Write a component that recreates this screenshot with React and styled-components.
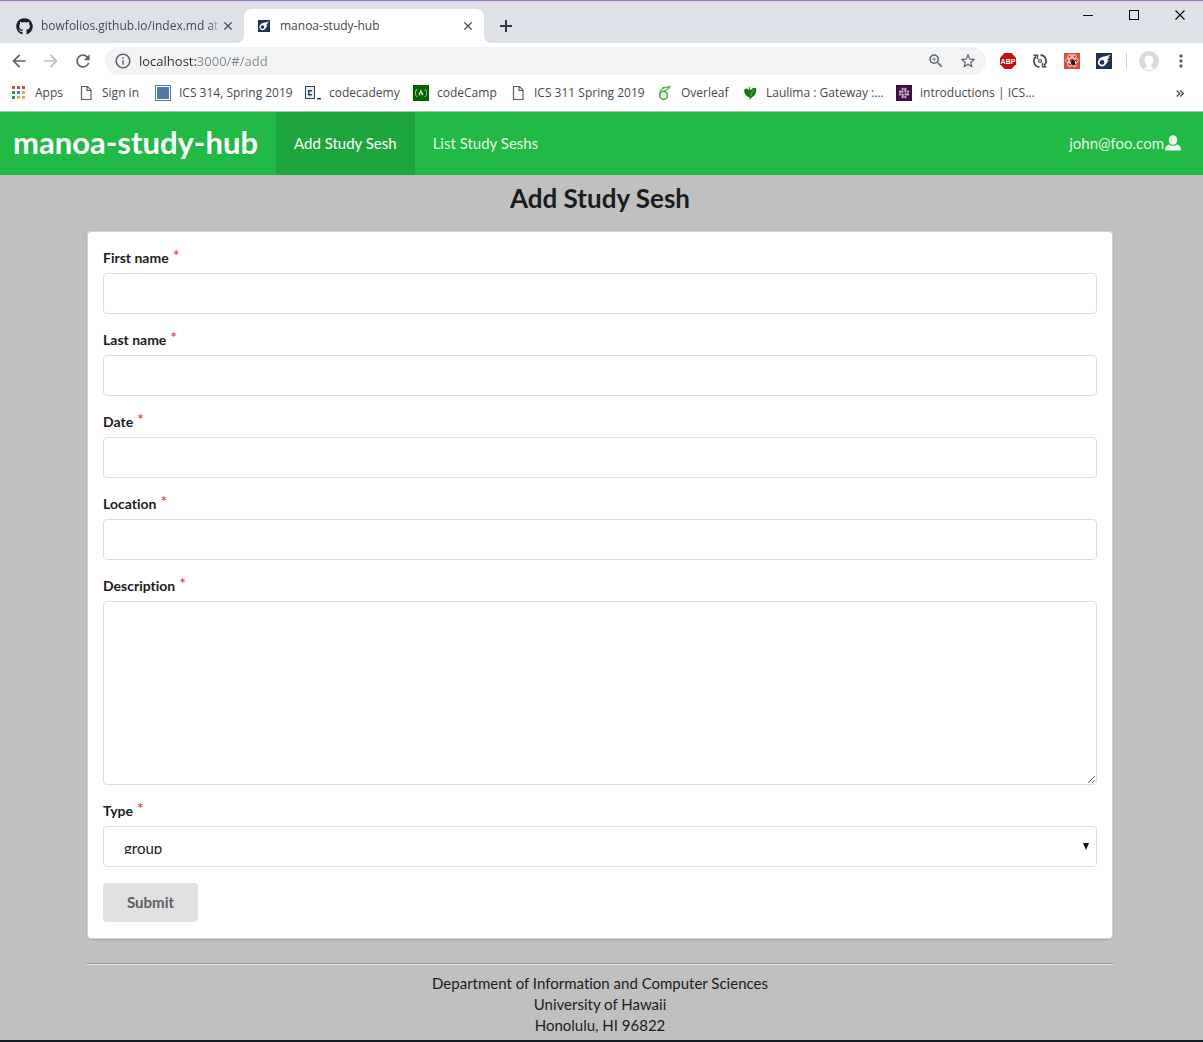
import React, { useState } from "react";
import styled, { createGlobalStyle, css } from "styled-components";
import { FaFreeCodeCamp, FaGithub, FaSlack } from "react-icons/fa";
import {
  MdArrowBack,
  MdArrowForward,
  MdInfoOutline,
  MdMoreVert,
  MdRefresh,
  MdStarBorder,
  MdZoomIn,
} from "react-icons/md";

const chromeFont = '"Open Sans", "Noto Sans", sans-serif';
const pageFont = 'Lato, "Liberation Sans", sans-serif';

const GlobalStyle = createGlobalStyle`
  *, *::before, *::after { box-sizing: border-box; font-feature-settings: "liga" 0; }
  body { margin: 0; background: #c0c0c0; }
  button, input, textarea, select { font: inherit; margin: 0; }
`;

const Window = styled.div`
  display: flex;
  flex-direction: column;
  min-height: 100vh;
  border-bottom: 2px solid #101c22;
`;

/* ---------- browser frame ---------- */

const TabStrip = styled.div`
  display: flex;
  align-items: flex-end;
  height: 43px;
  background: linear-gradient(#e2daf0 4px, #dee1e6 4px);
  border-top: 1px solid #8e7cab;
  font: 12px/16px ${chromeFont};
  color: #45494d;
`;

const Tab = styled.div`
  position: relative;
  display: flex;
  align-items: center;
  width: ${(p) => (p.$active ? 240 : 244)}px;
  height: 34px;
  padding: 0 8px 0 ${(p) => (p.$active ? 12 : 16)}px;
  ${(p) =>
    p.$active &&
    css`
      background: #fff;
      border-radius: 8px 8px 0 0;
      &::before,
      &::after {
        content: "";
        position: absolute;
        bottom: 0;
        width: 8px;
        height: 8px;
      }
      &::before {
        left: -8px;
        background: radial-gradient(circle at 0 0, transparent 8px, #fff 8px);
      }
      &::after {
        right: -8px;
        background: radial-gradient(circle at 100% 0, transparent 8px, #fff 8px);
      }
    `}
`;

const TabTitle = styled.span`
  flex: 1;
  min-width: 0;
  margin-left: 8px;
  overflow: hidden;
  white-space: nowrap;
  ${(p) => p.$fade && css`mask-image: linear-gradient(to right, #000 94%, transparent 100%);`}
`;

const BareButton = styled.button`
  display: inline-flex;
  align-items: center;
  justify-content: center;
  flex: none;
  width: ${(p) => p.$size || 16}px;
  height: ${(p) => p.$size || 16}px;
  padding: 0;
  border: 0;
  background: none;
  color: ${(p) => p.$color || "#5f6368"};
  svg { flex: none; }
`;

const NewTab = styled(BareButton)`
  margin: 0 0 9px 14px;
`;

const WindowControls = styled.div`
  display: flex;
  align-self: flex-start;
  gap: 30px;
  margin: 6px 15px 0 auto;
`;

const Toolbar = styled.div`
  display: flex;
  align-items: center;
  gap: 12px;
  height: 36px;
  padding: 0 12px 0 9px;
  background: #fff;
`;

const AddressBar = styled.div`
  display: flex;
  align-items: center;
  flex: 1;
  gap: 7px;
  height: 28px;
  padding: 0 10px 0 9px;
  border-radius: 14px;
  background: #f1f3f4;
  color: #5f6368;
`;

const AddressInput = styled.input`
  flex: 1;
  min-width: 0;
  padding: 0;
  border: 0;
  outline: 0;
  font: 13px/20px ${chromeFont};
  background: linear-gradient(to right, #2b2e31 58px, #80868b 58px);
  background-clip: text;
  -webkit-text-fill-color: transparent;
`;

const AddressActions = styled.div`
  display: flex;
  gap: 16px;
`;

const Extensions = styled.div`
  display: flex;
  align-items: center;
  gap: 16px;
  margin-left: 2px;
`;

const Profile = styled.div`
  display: flex;
  align-items: center;
  gap: 12px;
  padding-left: 13px;
  margin-left: -2px;
  background: linear-gradient(#cdd0d4, #cdd0d4) left center / 1px 16px no-repeat;
`;

const BookmarkBar = styled.nav`
  display: flex;
  align-items: center;
  height: 33px;
  padding: 0 15px 4px 11px;
  background: #fff;
  border-bottom: 1px solid #9fc7a6;
`;

const Bookmark = styled.a`
  display: flex;
  align-items: center;
  flex: none;
  gap: 8px;
  width: ${(p) => p.$width}px;
  color: #45494d;
  font: 12px/16px ${chromeFont};
  text-decoration: none;
  white-space: nowrap;
  svg { flex: none; }
`;

const Overflow = styled(BareButton)`
  margin-left: auto;
`;

/* ---------- site ---------- */

const NavBar = styled.nav`
  display: flex;
  align-items: stretch;
  height: 63px;
  padding-right: 4px;
  background: #21ba45;
  font: 15px/20px ${pageFont};
`;

const Brand = styled.a`
  display: flex;
  align-items: center;
  padding: 0 18px 4px 13px;
  color: #fff;
  font-size: 31px;
  line-height: 36px;
  font-weight: 700;
  text-decoration: none;
`;

const NavItem = styled.a`
  display: flex;
  align-items: center;
  gap: 1px;
  padding: 0 18px 2px;
  margin-left: ${(p) => (p.$end ? "auto" : 0)};
  background: ${(p) => (p.$active ? "#1ea63e" : "transparent")};
  color: ${(p) => (p.$active ? "#fff" : "rgba(255, 255, 255, 0.9)")};
  text-decoration: none;
`;

const Main = styled.main`
  flex: 1;
  padding: 6px 90px 0 87px;
  background: #c0c0c0;
  color: #1b1c1d;
  font: 15px/21px ${pageFont};
`;

const Title = styled.h2`
  margin: 0 0 16px;
  font-size: 26px;
  line-height: 34px;
  font-weight: 700;
  text-align: center;
`;

const Card = styled.form`
  display: flex;
  flex-direction: column;
  align-items: flex-start;
  gap: 16px;
  padding: 16px 15px;
  background: #fff;
  border: 1px solid #d4d4d5;
  border-radius: 4px;
  box-shadow: 0 1px 2px rgba(34, 36, 38, 0.15);
`;

const FieldBox = styled.div`
  width: 100%;
`;

const Label = styled.label`
  display: block;
  height: 20px;
  margin-bottom: 5px;
  font-size: 14px;
  line-height: 20px;
  font-weight: 700;
`;

const Required = styled.span`
  display: inline-block;
  margin-left: 4px;
  color: #db2828;
  font-size: 16px;
  font-weight: 400;
  line-height: 14px;
  vertical-align: top;
`;

const control = css`
  display: block;
  width: 100%;
  height: 41px;
  padding: 10px 15px;
  border: 1px solid #dcdddd;
  border-radius: 4px;
  outline: 0;
  background: #fff;
  color: #1b1c1d;
`;

const TextInput = styled.input`
  ${control}
`;

const TextArea = styled.textarea`
  ${control}
  height: 184px;
  resize: vertical;
`;

const SelectWrap = styled.div`
  position: relative;
  svg {
    position: absolute;
    right: 8px;
    top: 17px;
    pointer-events: none;
  }
`;

const Select = styled.select`
  ${control}
  padding: 11px 20px 12px;
  appearance: none;
`;

const Submit = styled.button`
  height: 39px;
  padding: 0 24px;
  border: 0;
  border-radius: 4px;
  background: #e0e1e2;
  color: #5f6061;
  font-weight: 700;
`;

const Rule = styled.hr`
  height: 2px;
  margin: 24px 0 8px;
  border: 0;
  border-top: 1px solid #979797;
  border-bottom: 1px solid #ececec;
`;

const Footer = styled.footer`
  padding-bottom: 4px;
  text-align: center;
`;

/* ---------- drawings ---------- */

const Cross = ({ size = 8, color = "#4a4d51", width = 1.6 }) => (
  <svg width={size} height={size} viewBox="0 0 10 10" stroke={color} strokeWidth={width}>
    <path d="M.5.5l9 9M9.5.5l-9 9" />
  </svg>
);

const MeteorIcon = ({ size = 16 }) => (
  <svg width={size} height={size} viewBox="0 0 16 16">
    <rect width="16" height="16" fill="#1f3157" />
    <circle cx="6" cy="9.4" r="3.3" fill="none" stroke="#fff" strokeWidth="1.8" />
    <path d="M3 6C5 3 9.500 4 15 1.500 13.500 3.500 12 4 11 4.600L14 4.400C12.500 5.500 11.200 6.300 10.600 7.300L13 7.200C11.500 8.500 10.500 10.500 9.600 11.500L9 8 7 6.200Z" fill="#fff" />
  </svg>
);

const appColors = ["#d5493d", "#d5493d", "#d5493d", "#2f9358", "#3f7de0", "#e9b02a", "#2f9358", "#e9b02a", "#e9b02a"];
const AppsIcon = () => (
  <svg width="16" height="16" viewBox="0 0 16 16">
    {appColors.map((c, i) => (
      <rect key={i} x={1 + (i % 3) * 5} y={1 + Math.floor(i / 3) * 5} width="3" height="3" fill={c} />
    ))}
  </svg>
);

const PageIcon = () => (
  <svg width="16" height="16" viewBox="0 0 16 16" fill="none" stroke="#5a5d61" strokeWidth="1.2">
    <path d="M3.500 1.500h6l3.500 3.500v9.500h-9.500zM9 1.500v4h4" />
  </svg>
);

const SquareIcon = () => (
  <svg width="16" height="16" viewBox="0 0 16 16">
    <rect x=".5" y=".5" width="15" height="15" fill="#fff" stroke="#507aa5" />
    <rect x="2" y="2" width="12" height="12" fill="#507aa5" />
  </svg>
);

const CodecademyIcon = () => (
  <svg width="16" height="16" viewBox="0 0 16 16">
    <path d="M0 1h10v13H0z" fill="#2d4257" />
    <path d="M1 2h8v11H1z" fill="#e4ecf2" />
    <path d="M3 5h4v1.500H4.500v2.500H7v1.500H3z" fill="#2d4257" />
    <path d="M12 13h4v1.500h-4z" fill="#2d4257" />
  </svg>
);

const CampIcon = () => (
  <svg width="16" height="16" viewBox="0 0 16 16">
    <rect width="16" height="16" fill="#006400" />
    <FaFreeCodeCamp x="2" y="2" size={12} color="#dcebdc" />
  </svg>
);

const OverleafIcon = () => (
  <svg width="16" height="16" viewBox="0 0 16 16" fill="none" stroke="#56ae4a" strokeWidth="1.7">
    <circle cx="6.500" cy="10.400" r="3.900" />
    <path d="M2.700 10C2.700 6 5 3.500 8.500 2.400M5.500 2.600C8 2.700 10.500 2.300 12.800 1.500 12 4 9 5 6 6.500" strokeWidth="1.3" />
  </svg>
);

const LeafIcon = () => (
  <svg width="16" height="16" viewBox="0 0 16 16">
    <path d="M6.500 1C8 2.500 8.500 3.500 8.500 5.500 10 3 12.500 2.500 14 3c1 4-1 8-4.500 9.500L7.500 15V12.500C3.500 11 1.500 8 2.500 4 4.500 3 6 3.500 7 5.200 7.200 3.500 7 2.500 6.500 1z" fill="#177a17" />
    <path d="M12.500 4.500C10.500 6 9.500 8 9 11" stroke="#5cb84a" fill="none" />
  </svg>
);

const SlackIcon = () => (
  <svg width="16" height="16" viewBox="0 0 16 16">
    <rect width="16" height="16" fill="#3f1141" />
    <FaSlack x="2" y="2" size={12} color="#c9a9cb" />
  </svg>
);

const AbpIcon = () => (
  <svg width="16" height="16" viewBox="0 0 16 16">
    <path d="M4.700 0h6.600L16 4.700v6.600L11.300 16H4.700L0 11.300V4.700z" fill="#c70d0d" />
    <text x="8" y="10.700" textAnchor="middle" fontFamily="Liberation Sans, sans-serif" fontSize="7" fontWeight="700" fill="#fff">ABP</text>
  </svg>
);

const SyncIcon = () => (
  <svg width="16" height="16" viewBox="0 0 16 16" fill="none" stroke="#4c4f53" strokeWidth="1.8">
    <path d="M7.500 14A6 6 0 0 1 4 3.500M8.500 2a6 6 0 0 1 3.500 10.500" />
    <path d="M1.500 2.300h4v4M14.500 13.700h-4v-4" strokeWidth="1.5" />
    <circle cx="8" cy="8" r="1.500" strokeWidth="1.2" />
  </svg>
);

const ReactIcon = () => (
  <svg width="16" height="16" viewBox="0 0 16 16" fill="none" stroke="#f7d6d2" strokeWidth="1">
    <rect width="16" height="16" fill="#dc4b40" stroke="none" />
    <ellipse cx="8" cy="7.500" rx="6.500" ry="2.600" />
    <ellipse cx="8" cy="7.500" rx="6.500" ry="2.600" transform="rotate(60 8 7.500)" />
    <ellipse cx="8" cy="7.500" rx="6.500" ry="2.600" transform="rotate(120 8 7.500)" />
    <ellipse cx="9" cy="9.500" rx="2" ry="2.800" fill="#3a1512" stroke="none" />
    <path d="M6 7l6 5M12 7l-6 5" stroke="#3a1512" strokeWidth=".8" />
  </svg>
);

const AvatarIcon = () => (
  <svg width="20" height="20" viewBox="0 0 20 20">
    <circle cx="10" cy="10" r="10" fill="#d9d9d9" />
    <path d="M10 4.500c3 0 4.500 2 4.500 4.500 0 2-.8 3.500-2 4.500v2.500c1 .6 2 1 2.500 1.500-3 2-7 2-10 0 .5-.5 1.500-.9 2.500-1.500v-2.500c-1.200-1-2-2.500-2-4.500 0-2.500 1.500-4.500 4.500-4.500z" fill="#fff" />
  </svg>
);

const UserIcon = () => (
  <svg width="16" height="16" viewBox="0 0 16 16" fill="currentColor">
    <ellipse cx="8" cy="5" rx="4.300" ry="4.800" />
    <path d="M0 14.500C0 11.500 1.500 10.200 4 9.500c2.500 1.600 5.500 1.600 8 0 2.500.7 4 2 4 5 0 .6-.4 1-1 1H1c-.6 0-1-.4-1-1z" />
  </svg>
);

const bookmarks = [
  ["Apps", AppsIcon, 67],
  ["Sign in", PageIcon, 77],
  ["ICS 314, Spring 2019", SquareIcon, 150],
  ["codecademy", CodecademyIcon, 108],
  ["codeCamp", CampIcon, 97],
  ["ICS 311 Spring 2019", PageIcon, 147],
  ["Overleaf", OverleafIcon, 85],
  ["Laulima : Gateway :...", LeafIcon, 154],
  ["introductions | ICS...", SlackIcon, 140],
];

function BrowserFrame() {
  const [url, setUrl] = useState("localhost:3000/#/add");
  return (
    <header>
      <TabStrip>
        <Tab>
          <FaGithub size={17} color="#1b1f23" />
          <TabTitle $fade>bowfolios.github.io/index.md at</TabTitle>
          <BareButton aria-label="Close tab"><Cross /></BareButton>
        </Tab>
        <Tab $active>
          <BareButton as="span"><MeteorIcon size={12} /></BareButton>
          <TabTitle>manoa-study-hub</TabTitle>
          <BareButton aria-label="Close tab"><Cross /></BareButton>
        </Tab>
        <NewTab aria-label="New tab">
          <svg width="12" height="12" viewBox="0 0 12 12" stroke="#34373b" strokeWidth="2"><path d="M6 0v12M0 6h12" /></svg>
        </NewTab>
        <WindowControls>
          <BareButton aria-label="Minimize">
            <svg width="10" height="10" viewBox="0 0 10 10" stroke="#000"><path d="M0 5.500h10" /></svg>
          </BareButton>
          <BareButton aria-label="Maximize">
            <svg width="10" height="10" viewBox="0 0 10 10" stroke="#000" fill="none"><rect x=".5" y=".5" width="9" height="9" /></svg>
          </BareButton>
          <BareButton aria-label="Close window"><Cross size={10} color="#000" width={1.1} /></BareButton>
        </WindowControls>
      </TabStrip>
      <Toolbar>
        <BareButton $size={20} aria-label="Back"><MdArrowBack size={20} /></BareButton>
        <BareButton $size={20} $color="#bcbec1" aria-label="Forward"><MdArrowForward size={20} /></BareButton>
        <BareButton $size={20} aria-label="Reload"><MdRefresh size={20} /></BareButton>
        <AddressBar>
          <MdInfoOutline size={18} />
          <AddressInput aria-label="Address" value={url} onChange={(e) => setUrl(e.target.value)} />
          <AddressActions>
            <BareButton aria-label="Zoom"><MdZoomIn size={18} /></BareButton>
            <BareButton aria-label="Bookmark this page"><MdStarBorder size={18} /></BareButton>
          </AddressActions>
        </AddressBar>
        <Extensions>
          <BareButton aria-label="Adblock Plus"><AbpIcon /></BareButton>
          <BareButton aria-label="Sync"><SyncIcon /></BareButton>
          <BareButton aria-label="React tools"><ReactIcon /></BareButton>
          <BareButton aria-label="Meteor tools"><MeteorIcon /></BareButton>
          <Profile>
            <BareButton $size={20} aria-label="Profile"><AvatarIcon /></BareButton>
            <BareButton $size={20} aria-label="Menu"><MdMoreVert size={20} /></BareButton>
          </Profile>
        </Extensions>
      </Toolbar>
      <BookmarkBar aria-label="Bookmarks">
        {bookmarks.map(([title, Icon, width]) => (
          <Bookmark key={title} href="#/" $width={width}>
            <Icon />
            {title}
          </Bookmark>
        ))}
        <Overflow aria-label="More bookmarks">
          <svg width="8" height="7" viewBox="0 0 8 7" fill="none" stroke="#4a4d51" strokeWidth="1.4"><path d="M.7.5l3 3-3 3M4.200.5l3 3-3 3" /></svg>
        </Overflow>
      </BookmarkBar>
    </header>
  );
}

function Field({ id, label, children }) {
  return (
    <FieldBox>
      <Label htmlFor={id}>
        {label}
        <Required>*</Required>
      </Label>
      {children}
    </FieldBox>
  );
}

export default function App() {
  return (
    <Window>
      <GlobalStyle />
      <BrowserFrame />
      <NavBar>
        <Brand href="#/">manoa-study-hub</Brand>
        <NavItem $active href="#/add">Add Study Sesh</NavItem>
        <NavItem href="#/list">List Study Seshs</NavItem>
        <NavItem $end href="#/profile">
          john@foo.com
          <UserIcon />
        </NavItem>
      </NavBar>
      <Main>
        <Title>Add Study Sesh</Title>
        <Card onSubmit={(e) => e.preventDefault()}>
          <Field id="first" label="First name"><TextInput id="first" /></Field>
          <Field id="last" label="Last name"><TextInput id="last" /></Field>
          <Field id="date" label="Date"><TextInput id="date" /></Field>
          <Field id="location" label="Location"><TextInput id="location" /></Field>
          <Field id="description" label="Description"><TextArea id="description" /></Field>
          <Field id="type" label="Type">
            <SelectWrap>
              <Select id="type" defaultValue="group">
                <option value="group">group</option>
              </Select>
              <svg width="6" height="7" viewBox="0 0 6 7"><path d="M0 0h6L3 7z" fill="#111" /></svg>
            </SelectWrap>
          </Field>
          <Submit type="submit">Submit</Submit>
        </Card>
        <Rule />
        <Footer>
          <div>Department of Information and Computer Sciences</div>
          <div>University of Hawaii</div>
          <div>Honolulu, HI 96822</div>
        </Footer>
      </Main>
    </Window>
  );
}
